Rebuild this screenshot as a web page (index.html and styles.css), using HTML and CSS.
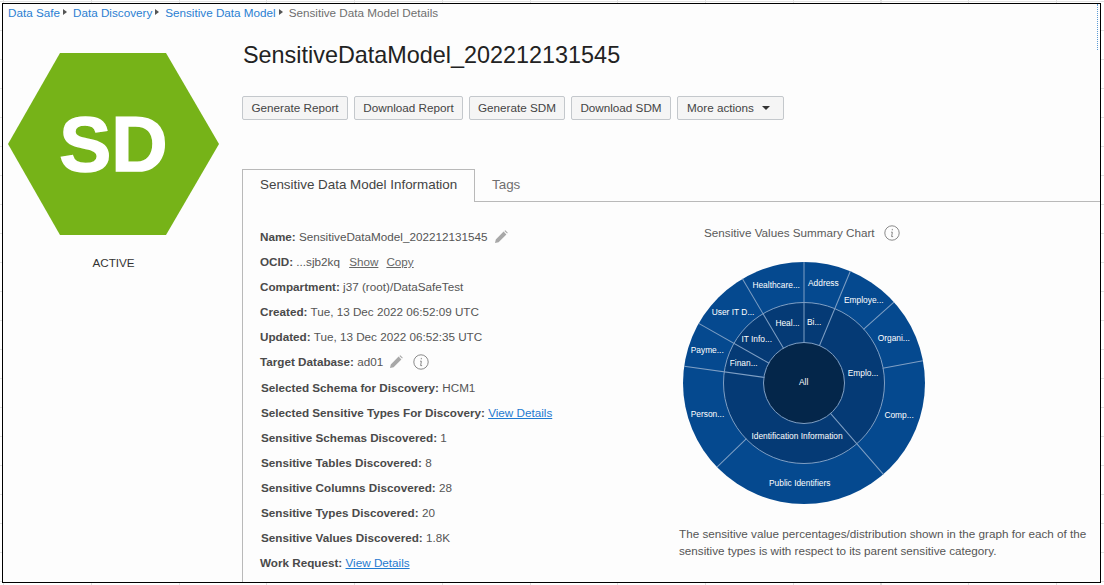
FILE: index.html
```html
<!DOCTYPE html>
<html lang="en">
<head>
<meta charset="utf-8">
<title>Sensitive Data Model Details</title>
<link rel="stylesheet" href="styles.css">
</head>
<body>
<div class="frame">
  <span class="edge-mark"></span>
  <nav class="crumbs">
    <a href="#">Data Safe</a><span class="sep"></span>
    <a href="#">Data Discovery</a><span class="sep"></span>
    <a href="#">Sensitive Data Model</a><span class="sep"></span>
    <span class="current">Sensitive Data Model Details</span>
  </nav>
  <div class="main">
    <aside class="side">
      <div class="hex">
        <svg class="hex-shape" width="211" height="182" viewBox="0 0 211 182"><polygon points="52,0 158,0 211,91 158,182 52,182 0,91"/></svg>
        <span class="hex-text">SD</span>
      </div>
      <div class="state">ACTIVE</div>
    </aside>
    <section class="content">
      <h1 class="title">SensitiveDataModel_202212131545</h1>
      <div class="actions">
        <button class="btn b1">Generate Report</button>
        <button class="btn b2">Download Report</button>
        <button class="btn b3">Generate SDM</button>
        <button class="btn b4">Download SDM</button>
        <button class="btn b5">More actions<span class="caret"></span></button>
      </div>
      <div class="tabs">
        <div class="tab active">Sensitive Data Model Information</div>
        <div class="tab">Tags</div>
      </div>
      <div class="panel">
        <div class="details">
          <div class="row"><b>Name:</b> SensitiveDataModel_202212131545
            <svg class="pencil" width="14" height="14" viewBox="0 0 14 14"><path d="M1 13l.8-3.6L9.6 1.6l2.8 2.8-7.8 7.8zM10.4.9l.9-.7 2.5 2.5-.7.9z"/></svg></div>
          <div class="row"><b>OCID:</b> ...sjb2kq <a class="plain first" href="#">Show</a><a class="plain" href="#">Copy</a></div>
          <div class="row"><b>Compartment:</b> j37 (root)/DataSafeTest</div>
          <div class="row"><b>Created:</b> Tue, 13 Dec 2022 06:52:09 UTC</div>
          <div class="row"><b>Updated:</b> Tue, 13 Dec 2022 06:52:35 UTC</div>
          <div class="row"><b>Target Database:</b> ad01
            <svg class="pencil" width="14" height="14" viewBox="0 0 14 14"><path d="M1 13l.8-3.6L9.6 1.6l2.8 2.8-7.8 7.8zM10.4.9l.9-.7 2.5 2.5-.7.9z"/></svg>
            <svg class="info" width="16" height="16" viewBox="0 0 16 16"><circle cx="8" cy="8" r="7.2"/><path d="M8.3 3.9v1.4M7 7.2h1.4L7.6 11.6h1.5"/></svg></div>
          <div class="row in"><b>Selected Schema for Discovery:</b> HCM1</div>
          <div class="row in"><b>Selected Sensitive Types For Discovery:</b> <a href="#">View Details</a></div>
          <div class="row in"><b>Sensitive Schemas Discovered:</b> 1</div>
          <div class="row in"><b>Sensitive Tables Discovered:</b> 8</div>
          <div class="row in"><b>Sensitive Columns Discovered:</b> 28</div>
          <div class="row in"><b>Sensitive Types Discovered:</b> 20</div>
          <div class="row in"><b>Sensitive Values Discovered:</b> 1.8K</div>
          <div class="row"><b>Work Request:</b> <a href="#">View Details</a></div>
        </div>
        <div class="chart">
          <div class="chart-title">Sensitive Values Summary Chart
            <svg class="info" width="16" height="16" viewBox="0 0 16 16"><circle cx="8" cy="8" r="7.2"/><path d="M8.3 3.9v1.4M7 7.2h1.4L7.6 11.6h1.5"/></svg></div>
          <svg class="sunburst" width="250" height="250" viewBox="-125 -125 250 250">
            <circle class="ring-outer" r="121"/>
            <circle class="ring-mid" r="80.5"/>
            <circle class="ring-in" r="40.5"/>
            <line x1="0" y1="-40" x2="0" y2="-121"/>
            <line x1="0" y1="-40" x2="0" y2="-121" transform="rotate(22.5)"/>
            <line x1="0" y1="-80" x2="0" y2="-121" transform="rotate(48)"/>
            <line x1="0" y1="-80" x2="0" y2="-121" transform="rotate(79.4)"/>
            <line x1="0" y1="-40" x2="0" y2="-121" transform="rotate(139)"/>
            <line x1="0" y1="-80" x2="0" y2="-121" transform="rotate(226)"/>
            <line x1="0" y1="-40" x2="0" y2="-121" transform="rotate(278)"/>
            <line x1="0" y1="-40" x2="0" y2="-121" transform="rotate(299.5)"/>
            <line x1="0" y1="-40" x2="0" y2="-121" transform="rotate(329.4)"/>
            <text x="4" y="-97">Address</text>
            <text x="-51.6" y="-95">Healthcare...</text>
            <text x="40" y="-80">Employe...</text>
            <text x="-92.3" y="-68.5">User IT D...</text>
            <text x="73.7" y="-42.5">Organi...</text>
            <text x="-113.3" y="-30">Payme...</text>
            <text x="-28.6" y="-57">Heal...</text>
            <text x="3" y="-58">Bi...</text>
            <text x="-62.6" y="-41">IT Info...</text>
            <text x="-74.3" y="-17.5">Finan...</text>
            <text x="43.7" y="-7.5">Emplo...</text>
            <text x="-5" y="2">All</text>
            <text x="80.4" y="35">Comp...</text>
            <text x="-113.3" y="33.5">Person...</text>
            <text x="-52.6" y="55.5">Identification Information</text>
            <text x="-35" y="103">Public Identifiers</text>
          </svg>
          <p class="note">The sensitive value percentages/distribution shown in the graph for each of the sensitive types is with respect to its parent sensitive category.</p>
        </div>
      </div>
    </section>
  </div>
</div>
</body>
</html>
```
FILE: styles.css
```css
* { box-sizing: border-box; }
html, body { height: 585px; overflow: hidden; }
body {
  margin: 0;
  padding: 3px 3px 2px 2px;
  font-family: "Liberation Sans", Arial, sans-serif;
  background-color: #fff;
  background-image:
    repeating-linear-gradient(90deg, transparent 0 3px, #e2e2e2 3px 4px, transparent 4px 87.75px),
    repeating-linear-gradient(0deg, transparent 0 3px, #e2e2e2 3px 4px, transparent 4px 29px);
}
.frame {
  position: relative;
  height: 580px;
  border: 1px solid #000;
  background: #fdfdfd;
  display: flex;
  flex-direction: column;
  overflow: hidden;
}
.edge-mark {
  position: absolute;
  top: 0;
  right: 2px;
  width: 1px;
  height: 46px;
  border-right: 1px dotted #5b9bd5;
}
.crumbs {
  height: 16px;
  margin-bottom: 2px;
  padding-left: 5px;
  display: flex;
  align-items: center;
  font-size: 11.7px;
  white-space: nowrap;
}
a { color: #1f7ad0; }
.crumbs a { text-decoration: none; color: #2a7fd2; }
.current { color: #6f6f6f; }
.sep {
  width: 0;
  height: 0;
  margin: 0 6px 0 3px;
  border-left: 4px solid #555;
  border-top: 3px solid transparent;
  border-bottom: 3px solid transparent;
}
.main { flex: 1; display: flex; min-height: 0; }
.side {
  width: 239px;
  padding: 31px 0 0 5px;
  flex: none;
}
.hex { position: relative; width: 211px; height: 182px; }
.hex-shape { display: block; fill: #76b318; }
.hex-text {
  position: absolute;
  inset: 0;
  display: flex;
  align-items: center;
  justify-content: center;
  color: #fff;
  font-size: 78px;
  font-weight: 700;
  -webkit-text-stroke: 1.5px #fff;
}
.state {
  width: 211px;
  margin-top: 20px;
  text-align: center;
  font-size: 11.7px;
  line-height: 16px;
  color: #333;
}
.content { flex: 1; min-width: 0; display: flex; flex-direction: column; }
.title {
  margin: 18px 0 0 1px;
  height: 30px;
  font-size: 23.4px;
  line-height: 30px;
  font-weight: 400;
  color: #222;
}
.actions { display: flex; gap: 6px; margin-top: 26px; height: 24px; }
.btn {
  height: 24px;
  padding: 0 0 2px;
  border: 1px solid #c4c8cc;
  border-radius: 2px;
  background: #f5f5f5;
  color: #444;
  font: 11.7px "Liberation Sans", Arial, sans-serif;
}
.b1 { width: 106px; }
.b2 { width: 109px; }
.b3 { width: 96px; }
.b4 { width: 100px; }
.b5 { width: 107px; display: flex; align-items: center; padding-left: 9px; }
.caret {
  margin: 2px 0 0 8px;
  border-top: 4px solid #333;
  border-left: 4px solid transparent;
  border-right: 4px solid transparent;
}
.tabs {
  display: flex;
  margin-top: 49px;
  height: 33px;
  border-bottom: 1px solid #b9b9b9;
}
.tab {
  padding: 0 17px;
  font-size: 13.4px;
  line-height: 31px;
  color: #6f6f6f;
}
.tab.active {
  width: 233px;
  height: 33px;
  border: 1px solid #b9b9b9;
  border-bottom: 0;
  background: #fdfdfd;
  color: #444;
  line-height: 29px;
  white-space: nowrap;
}
.panel {
  flex: 1;
  display: flex;
  border-left: 1px solid #b9b9b9;
  min-height: 0;
}
.details {
  width: 436px;
  padding: 22px 0 0 17px;
  flex: none;
}
.row {
  height: 25.1px;
  line-height: 25px;
  font-size: 11.7px;
  color: #555;
  white-space: nowrap;
}
.row.in { padding-left: 1px; }
.row b { color: #4a4a4a; }
.plain { color: #666; margin-left: 5px; }
.plain.first { margin-left: 6px; }
.plain + .plain { margin-left: 8px; }
.pencil { fill: #a8a8a8; vertical-align: -3px; margin-left: 3px; }
.info { fill: none; stroke: #8a8a8a; stroke-width: 1; vertical-align: -4px; margin-left: 6px; }
.chart { flex: 1; min-width: 0; }
.chart-title {
  margin: 21px 0 0 25px;
  height: 20px;
  line-height: 20px;
  font-size: 11.7px;
  color: #5a5a5a;
}
.sunburst { display: block; margin: 14.5px 0 0 0; }
.sunburst text {
  fill: #fff;
  font-size: 8.4px;
  font-family: "Liberation Sans", Arial, sans-serif;
}
.sunburst line { stroke: #7f9fc4; stroke-width: 1; }
.ring-outer { fill: #05498f; }
.ring-mid { fill: #053a75; stroke: #7f9fc4; stroke-width: 1; }
.ring-in { fill: #04264a; stroke: #7f9fc4; stroke-width: 1; }
.note {
  margin: 17px 0 0;
  font-size: 11.7px;
  line-height: 17px;
  color: #555;
}
```
